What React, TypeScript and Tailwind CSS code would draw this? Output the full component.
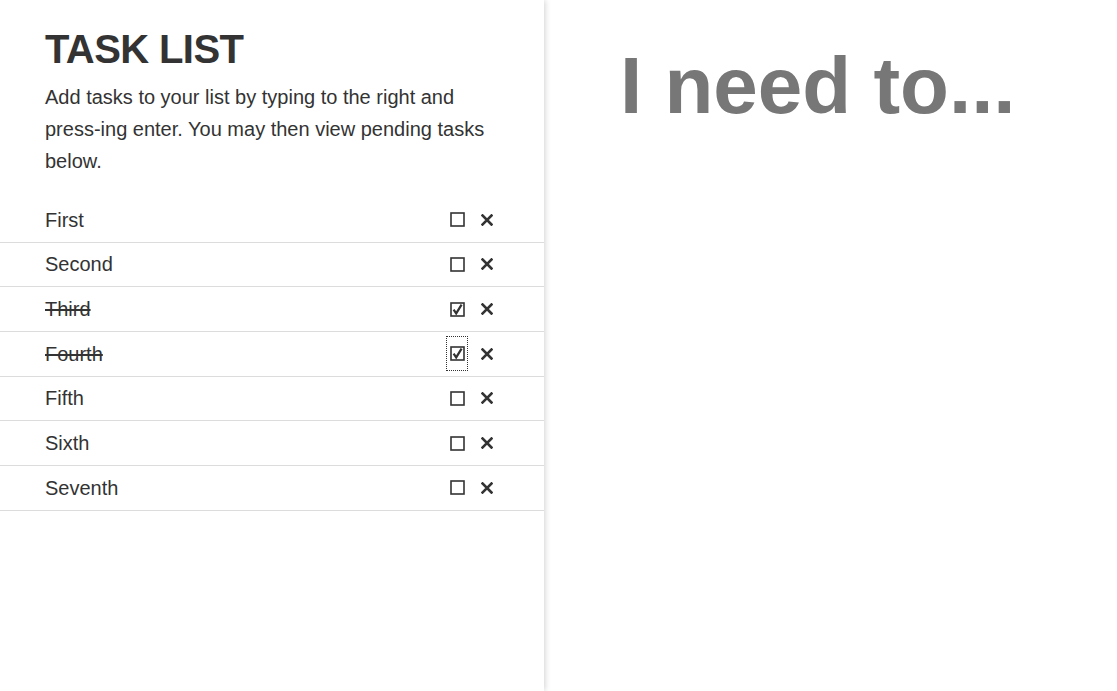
import React from "react";

const tasks = [
  { name: "First", done: false },
  { name: "Second", done: false },
  { name: "Third", done: true },
  { name: "Fourth", done: true, focus: true },
  { name: "Fifth", done: false },
  { name: "Sixth", done: false },
  { name: "Seventh", done: false },
];

function Box({ checked }: { checked: boolean }) {
  return (
    <svg width="15" height="15" viewBox="0 0 15 15" className="block">
      <rect x="1" y="1" width="13" height="13" fill="none" stroke="#333" strokeWidth="1.6" />
      {checked && (
        <path d="M3.6 7.6 L6.2 11.4 L11.6 2.6" fill="none" stroke="#333" strokeWidth="2.2" strokeLinejoin="miter" />
      )}
    </svg>
  );
}

function Cross() {
  return (
    <svg width="12" height="12" viewBox="0 0 12 12" className="block">
      <path d="M1.5 1.5 L10.5 10.5 M10.5 1.5 L1.5 10.5" stroke="#333" strokeWidth="2.6" strokeLinecap="square" />
    </svg>
  );
}

export default function App() {
  return (
    <div className="flex h-[691px] w-full bg-white text-[#333]" style={{ fontFamily: '"Liberation Sans", Arial, sans-serif' }}>
      <div className="relative z-10 h-full w-[544px] shrink-0 bg-white shadow-[1px_0_6px_rgba(0,0,0,0.18)]">
        <div className="px-[45px] pt-[26px]">
          <h1 className="text-[40px] font-bold leading-[46px] tracking-[-0.6px] text-[#333]">TASK LIST</h1>
          <p className="mt-[9px] text-[20px] leading-[32px] text-[#333]">
            Add tasks to your list by typing to the right and press-ing enter. You may then view pending tasks below.
          </p>
        </div>
        <ul className="mt-[21px]">
          {tasks.map((t) => (
            <li
              key={t.name}
              className="flex h-[44.67px] items-center border-b border-[#dcdcdc] pl-[45px] pr-[51px]"
            >
              <span className={`flex-1 text-[20px] leading-[24px] text-[#333] ${t.done ? "line-through" : ""}`}>
                {t.name}
              </span>
              <span
                className={`flex h-[35px] w-[22px] items-center justify-center ${
                  t.focus ? "border border-dotted border-[#333]" : ""
                }`}
              >
                <Box checked={t.done} />
              </span>
              <span className="ml-[13px] flex items-center">
                <Cross />
              </span>
            </li>
          ))}
        </ul>
      </div>
      <div className="flex-1 pl-[76px] pt-[40px]">
        <div className="text-[80px] font-bold leading-[92px] text-[#777]">I need to...</div>
      </div>
    </div>
  );
}
